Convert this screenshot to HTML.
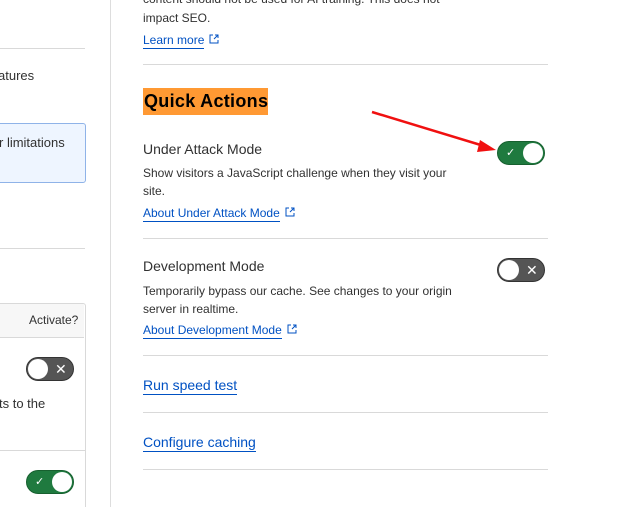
<!DOCTYPE html><html><head><style>
html,body{margin:0;width:619px;height:507px;overflow:hidden}
body{background:#fff;font-family:"Liberation Sans",sans-serif;color:#313131;position:relative}
.a{position:absolute;white-space:nowrap}
.l{position:absolute;height:1px;background:#d9d9d9}
.lk{color:#0051c3;border-bottom:1px solid #0051c3;padding-bottom:1px}
.s{font-size:12px;color:#313131}
.tg{position:absolute;width:46px;height:22px;border-radius:12px;border:1px solid #222}
.tg.on{background:#1f7a3f;border-color:#17602f}
.tg.off{background:#555;border-color:#333}
.kn{position:absolute;top:1px;width:20px;height:20px;border-radius:50%;background:#fff}
.ext{display:inline-block;margin-left:5px;vertical-align:0}
</style></head><body>
<div class="l" style="left:0;top:48px;width:85px"></div>
<div class="a" style="left:-2px;top:68px;font-size:13px">atures</div>
<div class="a" style="left:-6px;top:123px;width:90px;height:58px;background:#eef5ff;border:1px solid #8fb3e8;border-radius:3px"></div>
<div class="a" style="left:-1px;top:135px;font-size:13px">r limitations</div>
<div class="l" style="left:0;top:248px;width:85px"></div>
<div class="a" style="left:-6px;top:303px;width:90px;height:220px;border:1px solid #d9d9d9;border-radius:3px"></div>
<div class="a" style="left:0;top:304px;width:84px;height:33px;background:#f7f7f7;border-bottom:1px solid #d9d9d9"></div>
<div class="a" style="left:29px;top:313px;font-size:12px">Activate?</div>
<div class="tg off" style="left:26px;top:357px"><div class="kn" style="left:1px"></div><span class="a" style="left:28px;top:3px;color:#fff;font-size:14px">✕</span></div>
<div class="a" style="left:-1px;top:396px;font-size:13px">ts to the</div>
<div class="l" style="left:0;top:450px;width:85px"></div>
<div class="tg on" style="left:26px;top:470px"><div class="kn" style="left:25px"></div><span class="a" style="left:8px;top:4px;color:#fff;font-size:11px">✓</span></div>
<div class="a" style="left:110px;top:0;width:1px;height:507px;background:#ddd"></div>

<div class="a s" style="left:143px;top:-8px">content should not be used for AI training. This does not</div>
<div class="a s" style="left:143px;top:11px">impact SEO.</div>
<div class="a s" style="left:143px;top:33px"><span class="lk">Learn more</span><svg class="ext" width="10" height="10" viewBox="0 0 10 10"><path d="M4 1H1v8h8V6M6 1h3v3M9 1L5 5" stroke="#0051c3" fill="none"/></svg></div>
<div class="l" style="left:143px;top:64px;width:405px"></div>
<div class="a" style="left:143px;top:88px;width:125px;height:27px;background:#ff9933"></div>
<div class="a" style="left:144px;top:91px;font-size:18px;font-weight:bold;color:#000;letter-spacing:0.3px">Quick Actions</div>
<div class="a" style="left:143px;top:141px;font-size:14px">Under Attack Mode</div>
<div class="a s" style="left:143px;top:166px">Show visitors a JavaScript challenge when they visit your</div>
<div class="a s" style="left:143px;top:184px">site.</div>
<div class="a s" style="left:143px;top:206px"><span class="lk">About Under Attack Mode</span><svg class="ext" width="10" height="10" viewBox="0 0 10 10"><path d="M4 1H1v8h8V6M6 1h3v3M9 1L5 5" stroke="#0051c3" fill="none"/></svg></div>
<div class="tg on" style="left:497px;top:141px"><div class="kn" style="left:25px"></div><span class="a" style="left:8px;top:4px;color:#fff;font-size:11px">✓</span></div>
<div class="l" style="left:143px;top:238px;width:405px"></div>
<div class="a" style="left:143px;top:258px;font-size:14px">Development Mode</div>
<div class="a s" style="left:143px;top:284px">Temporarily bypass our cache. See changes to your origin</div>
<div class="a s" style="left:143px;top:302px">server in realtime.</div>
<div class="a s" style="left:143px;top:323px"><span class="lk">About Development Mode</span><svg class="ext" width="10" height="10" viewBox="0 0 10 10"><path d="M4 1H1v8h8V6M6 1h3v3M9 1L5 5" stroke="#0051c3" fill="none"/></svg></div>
<div class="tg off" style="left:497px;top:258px"><div class="kn" style="left:1px"></div><span class="a" style="left:28px;top:3px;color:#fff;font-size:14px">✕</span></div>
<div class="l" style="left:143px;top:355px;width:405px"></div>
<div class="a" style="left:143px;top:377px;font-size:14px"><span class="lk">Run speed test</span></div>
<div class="l" style="left:143px;top:412px;width:405px"></div>
<div class="a" style="left:143px;top:434px;font-size:14px"><span class="lk">Configure caching</span></div>
<div class="l" style="left:143px;top:469px;width:405px"></div>
<svg class="a" style="left:0;top:0" width="619" height="507"><line x1="372" y1="112" x2="484" y2="146" stroke="#f01010" stroke-width="2.5"/><polygon points="496,150 480,140 477,152" fill="#f01010"/></svg>
</body></html>
